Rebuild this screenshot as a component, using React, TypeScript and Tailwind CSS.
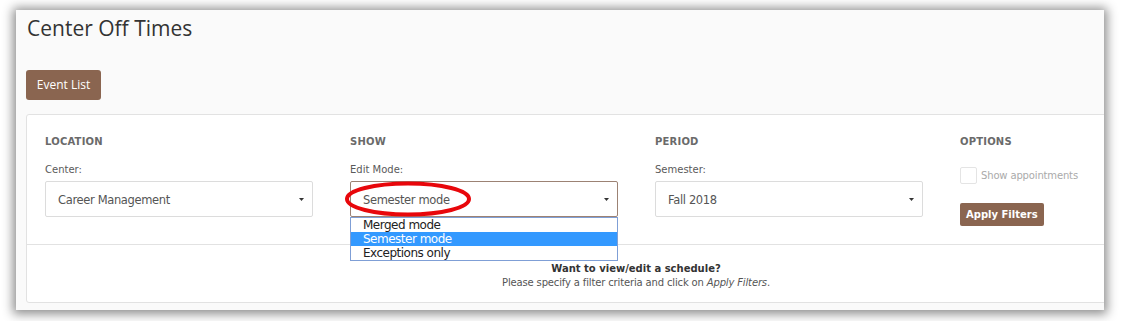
import React from "react";

const Caret = () => (
	<svg width="5" height="3" viewBox="0 0 5 3" className="shrink-0">
		<path d="M0 0h5L2.5 3z" fill="#333" />
	</svg>
);

interface SelectBoxProps {
	value: string;
	focused?: boolean;
}

const SelectBox = ({ value, focused }: SelectBoxProps) => (
	<div
		className={`flex items-center justify-between h-[36px] w-[268px] bg-white rounded-[2px] pl-3 pr-[8px] border ${
			focused ? "border-[#9c8274]" : "border-[#dcdcdc]"
		}`}
	>
		<span className="pt-[3px] text-[11.5px] tracking-[-0.35px] text-[#555]">{value}</span>
		<Caret />
	</div>
);

const Heading = ({ children }: { children: React.ReactNode }) => (
	<div className="text-[10px] font-bold tracking-[0.2px] text-[#6a6a6a] leading-none h-[10px]">{children}</div>
);

const Label = ({ children }: { children: React.ReactNode }) => (
	<div className="text-[10px] text-[#5a5a5a] leading-[11px] mt-[17px] mb-[6px]">{children}</div>
);

export default function App() {
	return (
		<div className="w-[1121px] h-[321px] bg-white overflow-hidden font-['DejaVu_Sans',sans-serif]">
			<div className="ml-4 mt-[10px] w-[1088px] h-[300px] bg-[#fafafa] overflow-hidden shadow-[0_1px_10px_3px_rgba(0,0,0,0.45)]">
				<h1 className="pl-[11px] pt-[4px] text-[21px] leading-[28px] text-[#333] font-['Open_Sans',sans-serif]">
					Center Off Times
				</h1>
				<button className="ml-[10px] mt-[28px] h-[30px] w-[75px] rounded-[3px] bg-[#8a6550] text-white text-[12px] font-['Open_Sans',sans-serif]">
					Event List
				</button>
				<div className="ml-[10px] mt-[14px] w-[1220px] h-[189px] bg-white border border-[#e2e2e2] rounded-[3px] flex flex-col">
					<div className="h-[130px] border-b border-[#e2e2e2] flex pl-[18px] pt-[22px]">
						<div className="w-[305px]">
							<Heading>LOCATION</Heading>
							<Label>Center:</Label>
							<SelectBox value="Career Management" />
						</div>
						<div className="w-[305px] relative">
							<Heading>SHOW</Heading>
							<Label>Edit Mode:</Label>
							<SelectBox value="Semester mode" focused />
							<div className="absolute left-0 top-[80px] w-[268px] bg-white border border-[#7f9fd6] text-[12px] tracking-[-0.5px] leading-[14px] text-[#222] z-10">
								<div className="pl-3">Merged mode</div>
								<div className="pl-3 bg-[#3399ff] text-white">Semester mode</div>
								<div className="pl-3">Exceptions only</div>
							</div>
							<svg className="absolute left-[-6px] top-[43px] z-20" width="132" height="38" viewBox="0 0 132 38">
								<ellipse cx="64" cy="19" rx="61" ry="15.5" fill="none" stroke="#e8070b" strokeWidth="4" />
							</svg>
						</div>
						<div className="w-[305px]">
							<Heading>PERIOD</Heading>
							<Label>Semester:</Label>
							<SelectBox value="Fall 2018" />
						</div>
						<div className="w-[160px]">
							<Heading>OPTIONS</Heading>
							<div className="flex items-center gap-[4px] mt-[20px]">
								<div className="w-[17px] h-[17px] border border-[#e4e4e4] rounded-[2px] bg-white" />
								<span className="text-[10px] tracking-[-0.15px] text-[#aaa]">Show appointments</span>
							</div>
							<button className="mt-[19px] h-[23px] px-[6px] rounded-[2px] bg-[#8a6550] text-white text-[10px] font-bold">
								Apply Filters
							</button>
						</div>
					</div>
					<div className="flex-1 flex flex-col items-center pt-[17px] text-[10px] leading-[14px]">
						<div className="font-bold text-[#333]">Want to view/edit a schedule?</div>
						<div className="text-[#555] tracking-[-0.15px]">
							Please specify a filter criteria and click on <i>Apply Filters</i>.
						</div>
					</div>
				</div>
			</div>
		</div>
	);
}
